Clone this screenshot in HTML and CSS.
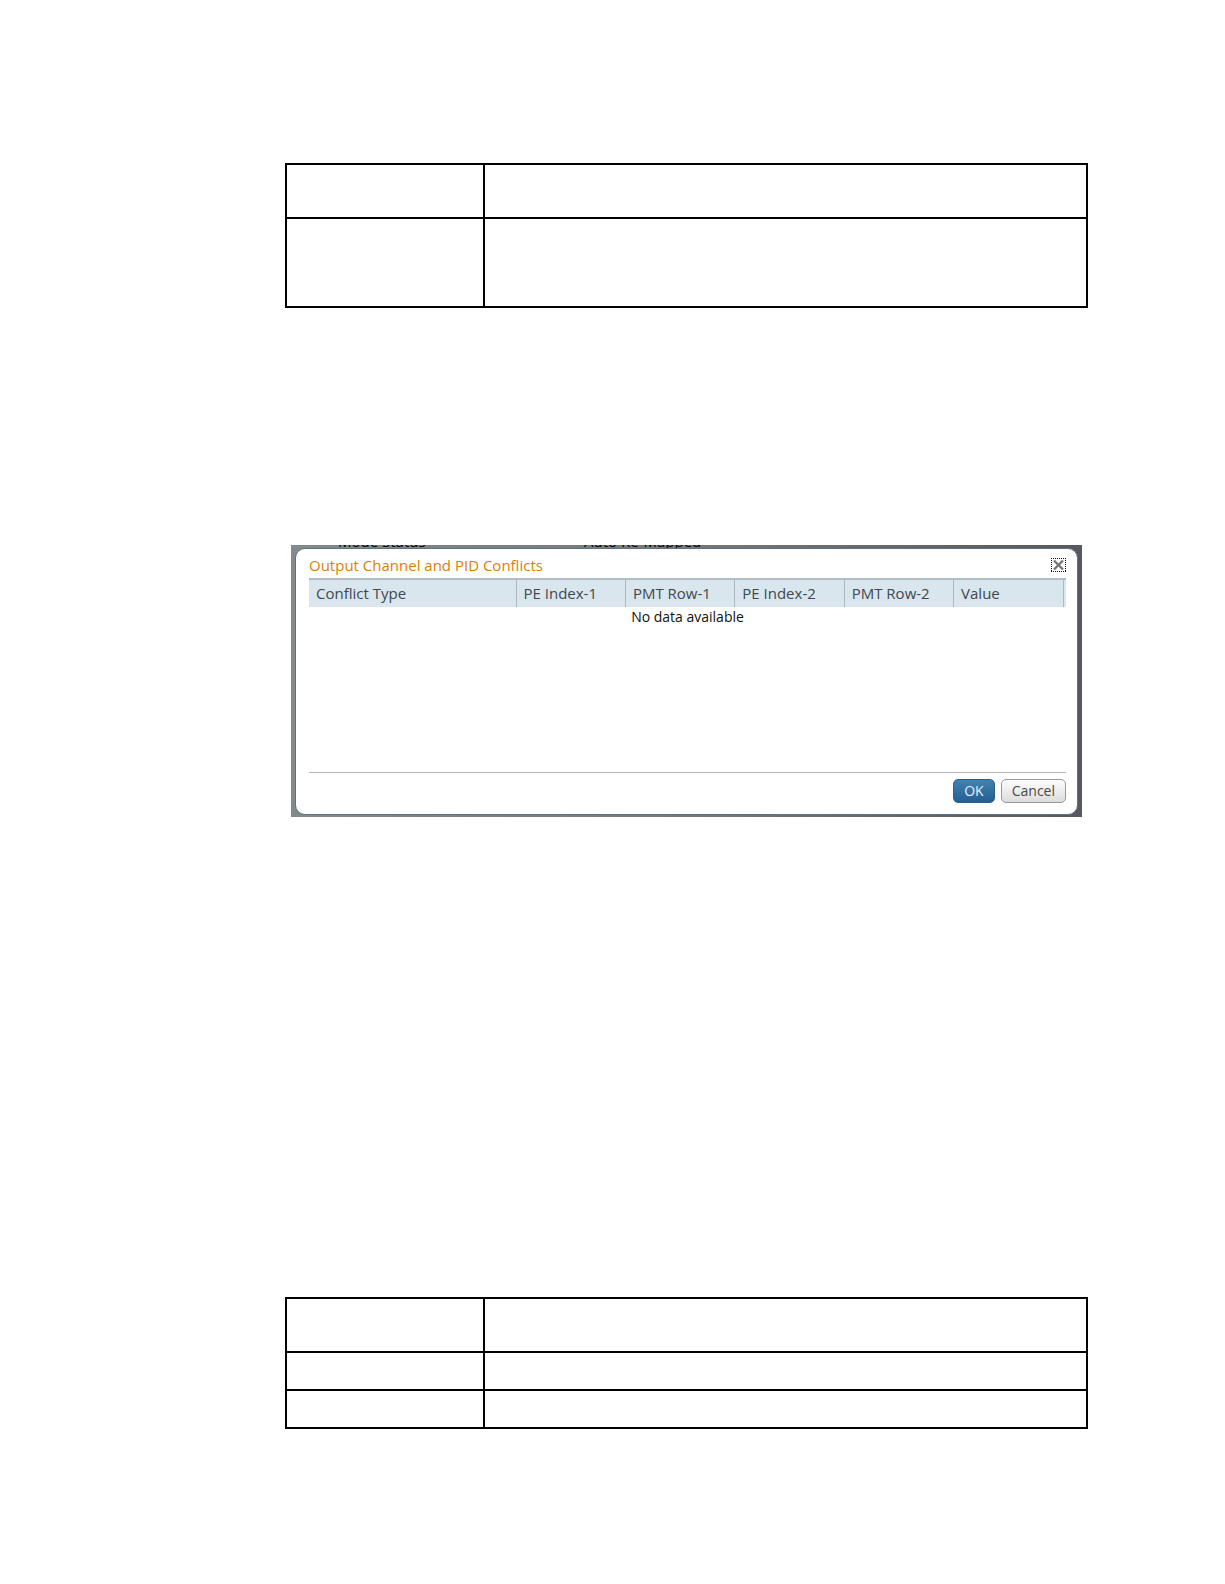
FILE: index.html
```html
<!DOCTYPE html>
<html lang="en">
<head>
    <meta charset="UTF-8">
    <meta name="viewport" content="width=device-width, initial-scale=1.0">
    <title>Output Channel and PID Conflicts</title>
    <link rel="stylesheet" href="styles.css">
</head>
<body>
    <main class="page">
        <table class="steps">
            <tr class="row-head"><td class="step"></td><td></td></tr>
            <tr class="row-tall"><td class="step"></td><td></td></tr>
        </table>

        <div class="screen">
            <div class="backdrop">
                <span class="backdrop-label">Mode Status</span>
                <span>Auto Re-Mapped</span>
            </div>
            <section class="dialog">
                <header class="dialog-header">
                    <h2>Output Channel and PID Conflicts</h2>
                    <button class="close" aria-label="Close">
                        <svg width="15" height="14" viewBox="0 0 15 14">
                            <path d="M0 0.5H15M0 13.5H15M0.5 0V14M14.5 0V14" fill="none" stroke="#111" stroke-dasharray="1 1"/>
                            <path d="M3 2.5L12 11.5M12 2.5L3 11.5" stroke="#777" stroke-width="2.4"/>
                        </svg>
                    </button>
                </header>
                <table class="conflicts">
                    <thead>
                        <tr>
                            <th class="type">Conflict Type</th>
                            <th>PE Index-1</th>
                            <th>PMT Row-1</th>
                            <th>PE Index-2</th>
                            <th>PMT Row-2</th>
                            <th>Value</th>
                            <td class="end"></td>
                        </tr>
                    </thead>
                    <tbody>
                        <tr><td class="empty" colspan="7">No data available</td></tr>
                    </tbody>
                </table>
                <footer class="dialog-footer">
                    <button class="btn btn-primary">OK</button>
                    <button class="btn">Cancel</button>
                </footer>
            </section>
        </div>

        <table class="steps">
            <tr class="row-head"><td class="step"></td><td></td></tr>
            <tr class="row-short"><td class="step"></td><td></td></tr>
            <tr class="row-short"><td class="step"></td><td></td></tr>
        </table>
    </main>
</body>
</html>
```

FILE: styles.css
```css
* {
    box-sizing: border-box;
}
body {
    margin: 0;
    background: white;
    font-family: "Open Sans", sans-serif;
    font-size: 15px;
    line-height: 20px;
}
.page {
    padding: 163px 137px 154px 285px;
}
table {
    width: 100%;
    table-layout: fixed;
    border-collapse: collapse;
}
.steps td {
    border: 2px solid black;
}
.steps .step {
    width: 198px;
}
.row-head {
    height: 54px;
}
.row-tall {
    height: 89px;
}
.row-short {
    height: 38px;
}

/* dialog over the dimmed window */
.screen {
    margin: 237px 6px 480px;
    padding: 0 4px 2px;
    background: linear-gradient(to right, #84898a, #74797b 50%, #56595e);
}
.backdrop {
    display: flex;
    align-items: flex-end;
    height: 3px;
    padding-left: 43px;
    overflow: hidden;
    color: black;
    line-height: 14px;
    white-space: nowrap;
}
.backdrop-label {
    width: 246px;
}
.dialog {
    padding: 4px 11px 11px 13px;
    background: white;
    border: 1px solid #5d7383;
    border-radius: 10px;
}
.dialog-header {
    display: flex;
    justify-content: space-between;
    align-items: center;
    height: 25px;
    padding-bottom: 2px;
}
.dialog-header h2 {
    margin: 0;
    color: #dd8000;
    font-size: 15px;
    font-weight: normal;
}
.close {
    display: flex;
    padding: 0;
    background: none;
    border: 0;
    cursor: pointer;
}
.conflicts th,
.conflicts .end {
    height: 28px;
    padding: 0 0 2px 7px;
    background: #dae6ee;
    border-top: 2px solid #b0bdc5;
    border-right: 1px solid #aab9c2;
    color: #404850;
    font-weight: normal;
    text-align: left;
}
.conflicts .type {
    width: 207px;
}
.conflicts .end {
    width: 3px;
    padding: 0;
    border-right: 0;
}
.conflicts .empty {
    height: 165px;
    padding: 0;
    color: #111;
    font-size: 14px;
    line-height: 20px;
    text-align: center;
    vertical-align: top;
}
.dialog-footer {
    display: flex;
    justify-content: flex-end;
    gap: 6px;
    padding-top: 6px;
    border-top: 1px solid #b5b9bb;
}
.btn {
    height: 24px;
    padding: 0 10px;
    background: linear-gradient(#fdfdfd, #dcdcdc);
    border: 1px solid #999;
    border-radius: 5px;
    color: #4a4a4a;
    font-family: inherit;
    font-size: 14px;
    line-height: 20px;
    cursor: pointer;
}
.btn-primary {
    background: linear-gradient(#4282b2, #245f92);
    border-color: #2b5f8b;
    color: #e4f0f8;
}
```
